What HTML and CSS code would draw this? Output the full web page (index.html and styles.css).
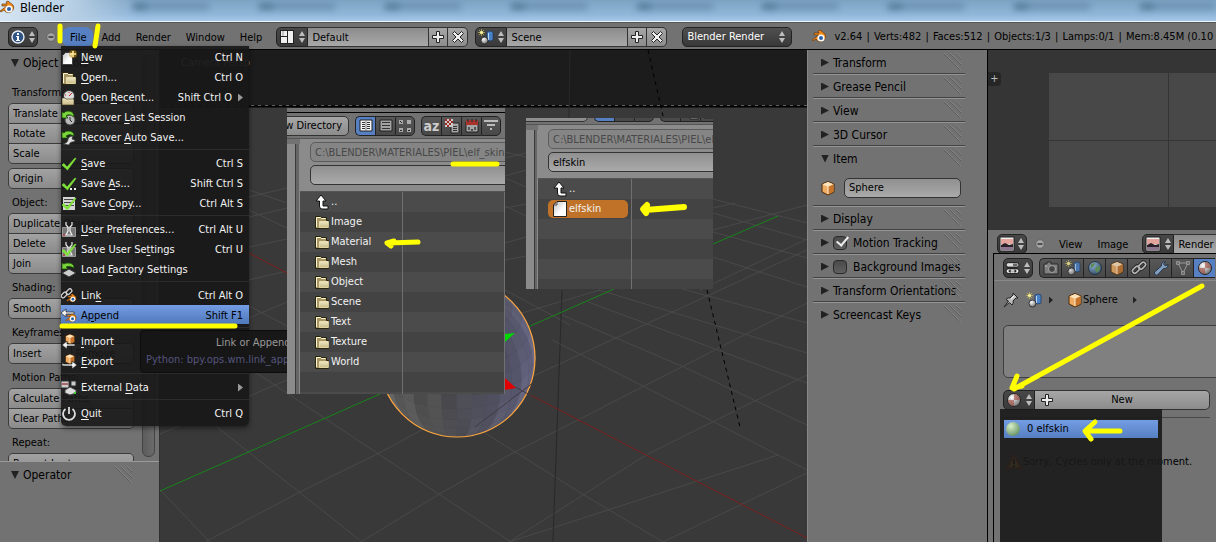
FILE: index.html
```html
<!DOCTYPE html>
<html lang="en">
<head>
    <meta charset="utf-8">
    <title>Blender</title>
    <link rel="stylesheet" href="styles.css">
</head>
<body>
    <svg class="defs" width="0" height="0">
        <defs>
            <linearGradient id="paper" x1="0" y1="0" x2="1" y2="1"><stop offset="0" stop-color="#bbb"/><stop offset="0.6" stop-color="#fff"/></linearGradient>
            <linearGradient id="tan" x1="0" y1="0" x2="0" y2="1"><stop offset="0" stop-color="#efe8c4"/><stop offset="1" stop-color="#c8bb88"/></linearGradient>
            <radialGradient id="ball" cx="0.35" cy="0.3" r="0.8"><stop offset="0" stop-color="#fff"/><stop offset="1" stop-color="#666"/></radialGradient>
            <radialGradient id="greenball" cx="0.35" cy="0.3" r="0.8"><stop offset="0" stop-color="#d8f0c8"/><stop offset="1" stop-color="#5d8a60"/></radialGradient>
            <radialGradient id="world" cx="0.35" cy="0.3" r="0.8"><stop offset="0" stop-color="#9cc4e8"/><stop offset="1" stop-color="#27486e"/></radialGradient>
        </defs>
        <symbol id="i-blender" viewBox="0 0 16 16">
            <path d="M1 11 8 6H3V4h5L7 2l2-1 5 4a5 5 0 1 1-9 5l-3 2z" fill="#f08a1c" stroke="#6e3a08" stroke-width="0.7"/>
            <circle cx="10" cy="9" r="3.6" fill="#fff"/><circle cx="10" cy="9" r="2" fill="#2a61a8"/>
        </symbol>
        <symbol id="i-updown" viewBox="0 0 8 14"><path d="M4 1 7 6H1zM4 13 1 8h6z" fill="#bdbdbd"/></symbol>
        <symbol id="i-info" viewBox="0 0 16 16"><circle cx="8" cy="8" r="6" fill="#2f5484" stroke="#e8eef6" stroke-width="1.4"/><path d="M7 4h2v2H7zM6 7h3v4h1v1H6v-1h1V8H6z" fill="#fff"/></symbol>
        <symbol id="i-minus" viewBox="0 0 10 10"><circle cx="5" cy="5" r="4.2" fill="#a5a5a5" stroke="#555" stroke-width="0.6"/><path d="M2.5 5h5" stroke="#333" stroke-width="1.5"/></symbol>
        <symbol id="i-plus" viewBox="0 0 16 16"><path d="M6.5 2.5h3v4h4v3h-4v4h-3v-4h-4v-3h4z" fill="#eee" stroke="#222"/></symbol>
        <symbol id="i-x" viewBox="0 0 16 16"><path d="m4.500 2.500 3.500 3.500 3.500-3.500 2 2L10 8l3.500 3.500-2 2L8 10l-3.500 3.500-2-2L6 8 2.500 4.500z" fill="#eee" stroke="#222"/></symbol>
        <symbol id="i-screen" viewBox="0 0 16 16"><path d="M1 1h14v14H1z" fill="#222"/><path d="M2 2h6v5H2zM2 8h6v6H2zM9 2h5v12H9z" fill="#f0f0f0"/><path d="M4 2v5" stroke="#999"/></symbol>
        <symbol id="i-scene" viewBox="0 0 16 16">
            <path d="M3.500 0v7M0 3.500h7M1 1l5 5M6 1 1 6" stroke="#d8cc50" stroke-width="0.6"/><circle cx="3.500" cy="3.500" r="1.600" fill="#f6efa0"/>
            <path d="M9 3q3-2 6 0v8q-3 2-6 0z" fill="#4a82c8" stroke="#1c3558" stroke-width="0.7"/><path d="M10.500 4v7" stroke="#b9d8f4"/>
            <circle cx="6.500" cy="11.500" r="3.500" fill="url(#ball)" stroke="#222" stroke-width="0.8"/>
        </symbol>
        <symbol id="i-new" viewBox="0 0 16 16"><path d="m4.500 2.500-3 3v9h10v-12z" fill="url(#paper)" stroke="#222" stroke-width="0.7"/><circle cx="12" cy="4" r="4" fill="#b8860b" opacity="0.55"/><path d="M12 1v6M9 4h6" stroke="#ffe9a0" stroke-width="1.6"/></symbol>
        <symbol id="i-folder" viewBox="0 0 16 16"><path d="M1.500 14.500v-12h5l1 1h5v3h2v8z" fill="#a89766" stroke="#29240f"/><path d="M2.500 13V3.500h4l1 1h4" stroke="#fff6d0" fill="none"/><path d="M5.500 7.500h9v6h-9z" fill="url(#tan)" stroke="#fff3c4" stroke-width="0.6"/></symbol>
        <symbol id="i-recent" viewBox="0 0 16 16"><circle cx="8" cy="6" r="5.500" fill="#ddd" stroke="#333"/><path d="m8 6 3-3M4 5h1M8 2v1" stroke="#b22"/><path d="M1 8h3l1 1h8v6H1z" fill="url(#tan)" stroke="#3b331a" stroke-width="0.6"/></symbol>
        <symbol id="i-recover" viewBox="0 0 16 16"><circle cx="9" cy="10" r="5" fill="#bbb" stroke="#444"/><path d="M9 7v3l2 2" stroke="#222" fill="none"/><path d="M1 2v6h6L5 6q3-3 8 1 0-6-6-6Q4 1 3 3z" fill="#7ad53c" stroke="#1d5208" stroke-width="0.8"/></symbol>
        <symbol id="i-autosave" viewBox="0 0 16 16"><path d="M2 14q5-1 5-5 1-3 5-3l-1 3 3 1q0 2-3 2-2 0-3 3z" fill="#ddd" stroke="#333" stroke-width="0.7"/><path d="M1 2v6h6L5 6q3-3 8 0 0-5-6-5Q4 1 3 3z" fill="#7ad53c" stroke="#1d5208" stroke-width="0.8"/></symbol>
        <symbol id="i-check" viewBox="0 0 16 16"><path d="m1 9 2-1.500 3 3.500 8-9 1 .5L6.500 14z" fill="#7fe33a" stroke="#7fe33a" stroke-width="0.6"/></symbol>
        <symbol id="i-saveas" viewBox="0 0 16 16"><use href="#i-check"/><path d="M9 12h2v2H9zM13 12h2v2h-2z" fill="#eee"/></symbol>
        <symbol id="i-savecopy" viewBox="0 0 16 16"><path d="M2 1h12v13H2z" fill="#d5d5d5"/><path d="M3 3.500h10M3 6.500h10M3 9.500h10" stroke="#444"/><use href="#i-check"/></symbol>
        <symbol id="i-prefs" viewBox="0 0 16 16"><path d="M1.500 5.500h13v9h-13z" fill="#777" stroke="#999"/><path d="M5 0v3l2 2v4l-2 4h6L9 9V5l2-2V0" fill="none" stroke="#eee" stroke-width="1.2"/><path d="M2 13h2" stroke="#d22"/></symbol>
        <symbol id="i-saveprefs" viewBox="0 0 16 16"><use href="#i-prefs"/><use href="#i-check"/></symbol>
        <symbol id="i-factory" viewBox="0 0 16 16"><path d="m1 11 7-4 7 4-7 4z" fill="#ccc" stroke="#333"/><path d="M1 1v6h6L5 5q3-2 8 1 0-5-6-5Q4 1 3 2z" fill="#7ad53c" stroke="#1d5208" stroke-width="0.8"/></symbol>
        <symbol id="i-chain" viewBox="0 0 16 16"><g fill="none" stroke="#111" stroke-width="3.4"><rect x="1" y="7.500" width="8" height="4.500" rx="2.200" transform="rotate(-45 5 9.700)"/><rect x="7" y="3.500" width="8" height="4.500" rx="2.200" transform="rotate(-45 11 5.700)"/></g><g fill="none" stroke="#ccc" stroke-width="1.700"><rect x="1" y="7.500" width="8" height="4.500" rx="2.200" transform="rotate(-45 5 9.700)"/><rect x="7" y="3.500" width="8" height="4.500" rx="2.200" transform="rotate(-45 11 5.700)"/></g></symbol>
        <symbol id="i-link" viewBox="0 0 16 16"><use href="#i-blender" x="5" y="5" width="11" height="11"/><use href="#i-chain" x="-1" y="-1" width="13" height="13"/></symbol>
        <symbol id="i-append" viewBox="0 0 16 16"><use href="#i-blender" x="4" y="4" width="12" height="12"/><path d="m0 5 5-4v3h8v2H5v3z" fill="#f4f4f4" stroke="#222" stroke-width="0.7"/></symbol>
        <symbol id="i-cube" viewBox="0 0 16 16"><path d="m8 1.500 6 2.500v8l-6 3-6-3V4z" fill="#f0ac62" stroke="#4a2a08"/><path d="m8 2 5.500 2.200L8 7 2.500 4.200z" fill="#ffe3bd"/><path d="m8 7 5.500-2.800v7.500L8 14.500z" fill="#c8742a"/><path d="M8 7v7" stroke="#fff0da"/></symbol>
        <symbol id="i-import" viewBox="0 0 16 16"><use href="#i-cube" x="3" y="-1" width="12" height="12"/><path d="m1 11 5-4v3h8v2H6v3z" fill="#f4f4f4" stroke="#222" stroke-width="0.7"/></symbol>
        <symbol id="i-export" viewBox="0 0 16 16"><use href="#i-cube" x="3" y="-1" width="12" height="12"/><path d="m16 11-5-4v3H3q-2 0-2-2v3q0 1 2 1h8v3z" fill="#f4f4f4" stroke="#222" stroke-width="0.7"/></symbol>
        <symbol id="i-external" viewBox="0 0 16 16"><path d="M0 1h8v7H0zM10 1h5v5h-5z" fill="#ccc" stroke="#333"/><path d="M1 4h6" stroke="#a66" stroke-width="2"/><path d="m4 10 5-3 6 3v3l-6 2-5-2z" fill="#ddd" stroke="#444"/><path d="M13 13h2" stroke="#4c3" stroke-width="2"/></symbol>
        <symbol id="i-quit" viewBox="0 0 16 16"><path d="M4.500 3a6 6 0 1 0 7 0M8 1v7" fill="none" stroke="#ddd" stroke-width="1.800"/></symbol>
        <symbol id="i-up" viewBox="0 0 16 16"><path d="m7 1 5 6H9v5h5v3H8q-2.500 0-2.500-3V7H2z" fill="#fff" stroke="#111"/></symbol>
        <symbol id="i-file" viewBox="0 0 16 16"><path d="m5 .5-3.500 3.500v11.500h13v-15z" fill="url(#paper)" stroke="#222"/><path d="M5 1v3H2" fill="none" stroke="#555"/></symbol>
        <symbol id="i-view1" viewBox="0 0 16 16"><path d="M2 2h12v11H2z" fill="#f5f5f5" stroke="#222"/><path d="M4 4.500h3M4 6.500h3M4 8.500h3M4 10.500h3M9 4.500h3M9 6.500h3M9 8.500h3M9 10.500h3" stroke="#333"/><path d="M8 3v10" stroke="#777"/></symbol>
        <symbol id="i-view2" viewBox="0 0 16 16"><path d="M2 2h12v11H2z" fill="#a2a2a2" stroke="#222"/><path d="M4 4.500h8M4 7.500h8M4 10.500h8" stroke="#333"/></symbol>
        <symbol id="i-view3" viewBox="0 0 16 16"><path d="M2 2h4v4H2zM10 2h4v4h-4zM2 10h4v4H2zM10 10h4v4h-4z" fill="#aaa"/><path d="M3 3h1v1H3zM4 4h1v1H4zM3 12h2v1H3zM11 12h2v1h-2z" fill="#222"/></symbol>
        <symbol id="i-ext" viewBox="0 0 16 16"><path d="M7 5h8v10H7z" fill="#a5a5a5" stroke="#222"/><path d="M9 8.500h4M9 10.500h4M9 12.500h4" stroke="#333"/><path d="M1 1h8v8H1z" fill="#ccc"/><path d="M1 1h2v2H1zM5 1h2v2H5zM3 3h2v2H3zM7 3h2v2H7zM1 5h2v2H1zM5 5h2v2H5zM3 7h2v2H3z" fill="#a02a22"/></symbol>
        <symbol id="i-date" viewBox="0 0 16 16"><path d="M2 4h12v10H2z" fill="#a5a5a5" stroke="#222"/><path d="M2 2h12v5H2z" fill="#a8332b"/><path d="M4 1v3M8 1v3M12 1v3M5 9v3M11 9v3M7 12h2" stroke="#333" stroke-width="1.400"/></symbol>
        <symbol id="i-filter" viewBox="0 0 16 16"><path d="M1 3h14M4 7h8M7 11h2" stroke="#bbb" stroke-width="2"/></symbol>
        <symbol id="i-image" viewBox="0 0 16 16"><path d="M1 1h14v14H1z" fill="#eee" stroke="#222"/><path d="M2 3h12v5H2z" fill="#e3a49c"/><path d="m2 9 4-2 4 2 4-1v3H2z" fill="#2b2027"/><path d="M2 11h12v3H2z" fill="#8d7790"/></symbol>
        <symbol id="i-props" viewBox="0 0 18 16"><rect x="1.500" y="2" width="14" height="5" rx="2" fill="#ddd" stroke="#111"/><path d="M9 3h5v3H9z" fill="#666"/><rect x="1.500" y="9" width="14" height="5" rx="2" fill="#f5f5f5" stroke="#111"/><path d="m4 11.500 2-1.500v3zM13 11.500 11 10v3zM5 11.500h7" fill="#111" stroke="#111" stroke-width="0.5"/></symbol>
        <symbol id="i-camera" viewBox="0 0 16 16"><path d="M1 4h3V2h4v2h7v10H1z" fill="#8c8c8c" stroke="#222"/><circle cx="9" cy="9" r="3.500" fill="#444" stroke="#bbb"/><path d="M2 6h2" stroke="#ddd"/></symbol>
        <symbol id="i-world" viewBox="0 0 16 16"><circle cx="8" cy="8" r="6.500" fill="url(#world)" stroke="#1b2c40"/><path d="m4 4 4-1-1 3-3 2zM9 7l4-1v4l-3 3-2-3z" fill="#5f9a58"/></symbol>
        <symbol id="i-wrench" viewBox="0 0 16 16"><path d="m1.500 12 7-6q-1-4 4-4.500L10.500 4l2 2 2.500-2q0 5-4.500 4.500l-6 6.500q-3 1-3-3z" fill="#8fb3de" stroke="#1d2c44"/></symbol>
        <symbol id="i-mesh" viewBox="0 0 16 16"><path d="M3 3h10L8 13z" fill="none" stroke="#aaa"/><path d="M1.500 1.500h3v3h-3zM11.500 1.500h3v3h-3zM6.500 11.500h3v3h-3z" fill="#777" stroke="#bbb" stroke-width="0.7"/></symbol>
        <symbol id="i-material" viewBox="0 0 16 16"><circle cx="8" cy="8" r="6.500" fill="url(#ball)" stroke="#222"/><path d="M8 2a6 6 0 0 1 6 6H8zM8 8v6a6 6 0 0 1-6-6z" fill="#a3483a" opacity="0.6"/></symbol>
        <symbol id="i-pin" viewBox="0 0 16 16"><path d="m1 15 4.500-6L3 7.500Q5 5 7 6l3-3V1l5 5h-2l-3 3q1 2-1 4l-2.500-2.500z" fill="#bdbdbd" stroke="#222"/><path d="m8 7 3-3" stroke="#fff"/></symbol>
        <symbol id="i-warn" viewBox="0 0 16 16"><path d="m8 1 7 13H1z" fill="#f0c860" stroke="#c84a18" stroke-width="1.500"/><path d="M8 5v5M8 11v2" stroke="#111" stroke-width="1.600"/></symbol>
        <symbol id="i-grip" viewBox="0 0 18 18"><path d="m0 1 17 17M6 1l11 11M12 1l5 5" stroke="#8c8c8c" stroke-width="0.7"/><path d="m0 2 16 16M6 2l11 11M12 2l5 5" stroke="#545454" stroke-width="0.7"/></symbol>
    </svg>

    <div class="app">
        <div class="titlebar">
            <svg class="icon"><use href="#i-blender"/></svg>
            <span>Blender</span>
            <div class="tabs"><i></i><i></i><i></i><i></i><i></i><i></i><i></i><i></i><i></i></div>
        </div>

        <header class="header">
            <button class="dark info" aria-label="Editor type"><svg class="icon"><use href="#i-info"/></svg><svg class="updown"><use href="#i-updown"/></svg></button>
            <button class="collapse" aria-label="Collapse menus"><svg><use href="#i-minus"/></svg></button>
            <nav class="menubar">
                <button class="active">File</button>
                <button>Add</button>
                <button>Render</button>
                <button>Window</button>
                <button>Help</button>
            </nav>
            <div class="datablock">
                <button class="dark" aria-label="Screen"><svg class="icon"><use href="#i-screen"/></svg><svg class="updown"><use href="#i-updown"/></svg></button>
                <input type="text" aria-label="Screen name" value="Default">
                <button class="light" aria-label="Add screen"><svg class="icon"><use href="#i-plus"/></svg></button>
                <button class="light" aria-label="Delete screen"><svg class="icon"><use href="#i-x"/></svg></button>
            </div>
            <div class="datablock">
                <button class="dark" aria-label="Scene"><svg class="icon"><use href="#i-scene"/></svg><svg class="updown"><use href="#i-updown"/></svg></button>
                <input type="text" aria-label="Scene name" value="Scene">
                <button class="light" aria-label="Add scene"><svg class="icon"><use href="#i-plus"/></svg></button>
                <button class="light" aria-label="Delete scene"><svg class="icon"><use href="#i-x"/></svg></button>
            </div>
            <div class="engine">
                <select aria-label="Render engine"><option>Blender Render</option></select>
                <svg class="updown"><use href="#i-updown"/></svg>
            </div>
            <svg class="icon logo"><use href="#i-blender"/></svg>
            <span class="stats">v2.64 <i>|</i> Verts:482 <i>|</i> Faces:512 <i>|</i> Objects:1/3 <i>|</i> Lamps:0/1 <i>|</i> Mem:8.45M (0.10</span>
        </header>

        <main class="workspace">
            <aside class="shelf">
                <section class="tools">
                    <h2 class="open">Object Tools</h2>
                    <div class="tool-list">
                        <p>Transform:</p>
                        <div class="group"><button>Translate</button><button>Rotate</button><button>Scale</button></div>
                        <div class="group"><button>Origin</button></div>
                        <p>Object:</p>
                        <div class="group"><button>Duplicate Objects</button><button>Delete</button><button>Join</button></div>
                        <p>Shading:</p>
                        <div class="group pair"><button>Smooth</button><button>Flat</button></div>
                        <p>Keyframes:</p>
                        <div class="group pair"><button>Insert</button><button>Remove</button></div>
                        <p>Motion Paths:</p>
                        <div class="group"><button>Calculate Paths</button><button>Clear Paths</button></div>
                        <p>Repeat:</p>
                        <div class="group"><button>Repeat Last</button></div>
                    </div>
                    <div class="scrollbar"></div>
                </section>
                <section class="operator">
                    <h2 class="open">Operator</h2>
                    <svg class="grip"><use href="#i-grip"/></svg>
                </section>
            </aside>

            <section class="viewport">
                <svg class="scene" viewBox="160 50 647 492" preserveAspectRatio="xMinYMin slice">
                    <g stroke="#494949" fill="none">
                        <path d="M160 490 210 542M160 382 361 541M249 368 511 542M453 413 584 495 663 542M552 340 714 422 807 470M562 315 684 367 807 425M588 302 807 383M599 290 807 353M620 272 807 323M713 257 807 287M713 232 807 258M713 213 807 240M713 199 807 223"/>
                        <path d="M205 542 300 492 381 452 453 413 807 250M361 542 441 493 513 453 807 303M509 542 778 455M663 542 807 473M509 542 646 455 807 375M700 290 807 239M713 230 807 205M713 208 735 203M160 434 287 380M249 197 287 188M249 217 287 208M249 247 287 239M249 280 287 271M249 318 287 302M249 190 287 203M249 210 287 228M249 306 287 326M505 158 526 153M505 176 526 170M505 208 526 204M505 243 526 237M505 260 526 256M505 152 526 157M505 178 526 187M505 206 526 216M505 290 570 325M505 318 600 290"/>
                    </g>
                    <path d="M160 50h647v56H160z" fill="#1c1c1c"/>
                    <path d="M160 106.500H807" stroke="#000" stroke-width="2"/><path d="M160 105.500H807" stroke="#606060" stroke-dasharray="3 4"/>
                    <path d="M570 50 569 118M562 290 553 542" stroke="#292929" fill="none"/>
                    <path d="M648 50 663 116M707 290 740 427" stroke="#000" stroke-dasharray="4 4"/>
                    <path d="M160 491 380 394M528 327 614 289M713 244 778 216" stroke="#18841b"/>
                    <path d="M249 253 287 273M515 387 646 455 807 538" stroke="#7b1e1e" fill="none"/>
                    <g id="facets"></g>
                    <ellipse cx="457" cy="358" rx="78" ry="79" fill="none" stroke="#ffa53c" stroke-width="1.200"/>
                    <path d="m475 427 59-45M515 387l17 9" stroke="#403c44"/>
                    <path d="m505 334 10-1-10 9z" fill="#00d800"/><path d="m505 378 11 10-11 2z" fill="#e00000"/>
                </svg>
                <span class="persp">Camera Persp</span>
            </section>

            <aside class="npanel">
                <section><h3>Transform</h3><svg class="grip"><use href="#i-grip"/></svg></section>
                <section><h3>Grease Pencil</h3><svg class="grip"><use href="#i-grip"/></svg></section>
                <section><h3>View</h3><svg class="grip"><use href="#i-grip"/></svg></section>
                <section><h3>3D Cursor</h3><svg class="grip"><use href="#i-grip"/></svg></section>
                <section>
                    <h3 class="open">Item</h3><svg class="grip"><use href="#i-grip"/></svg>
                    <div class="item-name"><svg class="icon"><use href="#i-cube"/></svg><input type="text" aria-label="Object name" value="Sphere"></div>
                </section>
                <section><h3>Display</h3><svg class="grip"><use href="#i-grip"/></svg></section>
                <section><h3><input type="checkbox" id="motion" checked><label for="motion">Motion Tracking</label></h3><svg class="grip"><use href="#i-grip"/></svg></section>
                <section><h3><input type="checkbox" id="background"><label for="background">Background Images</label></h3><svg class="grip"><use href="#i-grip"/></svg></section>
                <section><h3>Transform Orientations</h3><svg class="grip"><use href="#i-grip"/></svg></section>
                <section><h3>Screencast Keys</h3><svg class="grip"><use href="#i-grip"/></svg></section>
            </aside>

            <div class="right">
                <section class="image-editor">
                    <div class="canvas">
                        <button class="expand" aria-label="Show panel">+</button>
                        <div class="frame"></div>
                    </div>
                    <div class="image-header">
                        <button class="dark" aria-label="Editor type"><svg class="icon"><use href="#i-image"/></svg><svg class="updown"><use href="#i-updown"/></svg></button>
                        <button class="collapse" aria-label="Collapse menus"><svg><use href="#i-minus"/></svg></button>
                        <nav class="menubar"><button>View</button><button>Image</button></nav>
                        <div class="datablock">
                            <button class="dark" aria-label="Image"><svg class="icon"><use href="#i-image"/></svg><svg class="updown"><use href="#i-updown"/></svg></button>
                            <input type="text" aria-label="Image name" value="Render Result">
                        </div>
                    </div>
                </section>
                <section class="properties">
                    <div class="props-header">
                        <button class="dark" aria-label="Editor type"><svg class="icon"><use href="#i-props"/></svg><svg class="updown"><use href="#i-updown"/></svg></button>
                        <div class="prop-tabs">
                            <button aria-label="Render"><svg class="icon"><use href="#i-camera"/></svg></button>
                            <button aria-label="Scene"><svg class="icon"><use href="#i-scene"/></svg></button>
                            <button aria-label="World"><svg class="icon"><use href="#i-world"/></svg></button>
                            <button aria-label="Object"><svg class="icon"><use href="#i-cube"/></svg></button>
                            <button aria-label="Constraints"><svg class="icon"><use href="#i-chain"/></svg></button>
                            <button aria-label="Modifiers"><svg class="icon"><use href="#i-wrench"/></svg></button>
                            <button aria-label="Data"><svg class="icon"><use href="#i-mesh"/></svg></button>
                            <button class="active" aria-label="Material"><svg class="icon"><use href="#i-material"/></svg></button>
                        </div>
                    </div>
                    <div class="path">
                        <svg class="icon"><use href="#i-pin"/></svg>
                        <svg class="icon"><use href="#i-scene"/></svg>
                        <b></b>
                        <svg class="icon cube"><use href="#i-cube"/></svg>
                        <span>Sphere</span>
                        <b></b>
                    </div>
                    <div class="slots"></div>
                    <div class="material-row">
                        <button class="dark" aria-label="Browse material"><svg class="icon"><use href="#i-material"/></svg><svg class="updown"><use href="#i-updown"/></svg></button>
                        <button class="light"><svg class="icon"><use href="#i-plus"/></svg><span>New</span></button>
                        <div class="material-popup">
                            <button><svg class="icon"><circle cx="8" cy="8" r="7" fill="url(#greenball)"/></svg>0 elfskin</button>
                        </div>
                    </div>
                    <div class="warning"><svg class="icon"><use href="#i-warn"/></svg>Sorry, Cycles only at the moment.</div>
                </section>
            </div>
        </main>

        <div class="file-menu">
            <button><svg class="icon"><use href="#i-new"/></svg><span><u>N</u>ew</span><kbd>Ctrl N</kbd></button>
            <button><svg class="icon"><use href="#i-folder"/></svg><span><u>O</u>pen...</span><kbd>Ctrl O</kbd></button>
            <button class="sub"><svg class="icon"><use href="#i-recent"/></svg><span>Open <u>R</u>ecent...</span><kbd>Shift Ctrl O</kbd></button>
            <button><svg class="icon"><use href="#i-recover"/></svg><span>Recover <u>L</u>ast Session</span></button>
            <button><svg class="icon"><use href="#i-autosave"/></svg><span>Recover <u>A</u>uto Save...</span></button>
            <hr>
            <button><svg class="icon"><use href="#i-check"/></svg><span><u>S</u>ave</span><kbd>Ctrl S</kbd></button>
            <button><svg class="icon"><use href="#i-saveas"/></svg><span>Save <u>A</u>s...</span><kbd>Shift Ctrl S</kbd></button>
            <button><svg class="icon"><use href="#i-savecopy"/></svg><span>Save <u>C</u>opy...</span><kbd>Ctrl Alt S</kbd></button>
            <hr>
            <button><svg class="icon"><use href="#i-prefs"/></svg><span><u>U</u>ser Preferences...</span><kbd>Ctrl Alt U</kbd></button>
            <button><svg class="icon"><use href="#i-saveprefs"/></svg><span>Save User Se<u>t</u>tings</span><kbd>Ctrl U</kbd></button>
            <button><svg class="icon"><use href="#i-factory"/></svg><span>Load <u>F</u>actory Settings</span></button>
            <hr>
            <button><svg class="icon"><use href="#i-link"/></svg><span>Lin<u>k</u></span><kbd>Ctrl Alt O</kbd></button>
            <button class="active"><svg class="icon"><use href="#i-append"/></svg><span>A<u>p</u>pend</span><kbd>Shift F1</kbd></button>
            <hr>
            <button><svg class="icon"><use href="#i-import"/></svg><span><u>I</u>mport</span></button>
            <button><svg class="icon"><use href="#i-export"/></svg><span><u>E</u>xport</span></button>
            <hr>
            <button class="sub"><svg class="icon"><use href="#i-external"/></svg><span>External <u>D</u>ata</span></button>
            <hr>
            <button><svg class="icon"><use href="#i-quit"/></svg><span><u>Q</u>uit</span><kbd>Ctrl Q</kbd></button>
        </div>

        <div class="tooltip">
            <p>Link or Append</p>
            <p class="python">Python: bpy.ops.wm.link_app</p>
        </div>

        <div class="browser browser-dirs">
            <div class="browser-edge"></div>
            <div class="browser-bar">
                <button class="light dir">w Directory</button>
                <div class="icons">
                    <button class="active" aria-label="Short list"><svg class="icon"><use href="#i-view1"/></svg></button>
                    <button aria-label="Detailed list"><svg class="icon"><use href="#i-view2"/></svg></button>
                    <button aria-label="Thumbnails"><svg class="icon"><use href="#i-view3"/></svg></button>
                </div>
                <div class="icons">
                    <button class="az">az</button>
                    <button aria-label="Sort by extension"><svg class="icon"><use href="#i-ext"/></svg></button>
                    <button aria-label="Sort by date"><svg class="icon"><use href="#i-date"/></svg></button>
                    <button aria-label="Filter"><svg class="icon"><use href="#i-filter"/></svg></button>
                </div>
            </div>
            <div class="browser-body">
                <div class="gutter"></div>
                <div class="browser-main">
                    <div class="fields">
                        <input type="text" class="dim" aria-label="Directory" value="C:\BLENDER\MATERIALES\PIEL\elf_skin.blend">
                        <input type="text" aria-label="File name" value="">
                    </div>
                    <ul>
                        <li><svg class="icon"><use href="#i-up"/></svg>..</li>
                        <li><svg class="icon"><use href="#i-folder"/></svg>Image</li>
                        <li><svg class="icon"><use href="#i-folder"/></svg>Material</li>
                        <li><svg class="icon"><use href="#i-folder"/></svg>Mesh</li>
                        <li><svg class="icon"><use href="#i-folder"/></svg>Object</li>
                        <li><svg class="icon"><use href="#i-folder"/></svg>Scene</li>
                        <li><svg class="icon"><use href="#i-folder"/></svg>Text</li>
                        <li><svg class="icon"><use href="#i-folder"/></svg>Texture</li>
                        <li><svg class="icon"><use href="#i-folder"/></svg>World</li>
                    </ul>
                </div>
            </div>
        </div>

        <div class="browser browser-files">
            <div class="browser-bar">
                <button class="light dir">w Directory</button>
                <div class="icons">
                    <button class="active" aria-label="Short list"><svg class="icon"><use href="#i-view1"/></svg></button>
                    <button aria-label="Detailed list"><svg class="icon"><use href="#i-view2"/></svg></button>
                    <button aria-label="Thumbnails"><svg class="icon"><use href="#i-view3"/></svg></button>
                </div>
                <div class="icons">
                    <button class="az">az</button>
                    <button aria-label="Sort by extension"><svg class="icon"><use href="#i-ext"/></svg></button>
                    <button aria-label="Sort by date"><svg class="icon"><use href="#i-date"/></svg></button>
                </div>
            </div>
            <div class="browser-body">
                <div class="gutter"></div>
                <div class="browser-main">
                    <div class="fields">
                        <input type="text" class="dim" aria-label="Directory" value="C:\BLENDER\MATERIALES\PIEL\elf_skin.blend">
                        <input type="text" aria-label="File name" value="elfskin">
                    </div>
                    <ul>
                        <li><svg class="icon"><use href="#i-up"/></svg>..</li>
                        <li class="selected"><svg class="icon"><use href="#i-file"/></svg>elfskin</li>
                    </ul>
                </div>
            </div>
        </div>

        <!-- yellow marker strokes -->
        <svg class="marks">
            <path d="M60 26V41M98 26 95 46M62 326 235 326M453 164H497" stroke-width="5"/>
            <path d="M418 242 388 243M394 241 387 243 391 246" stroke-width="5"/>
            <path d="M684 207 645 210M647 205 643 209 646 213" stroke-width="6"/>
            <path d="M1202 286 1014 389M1017 376 1012 388 1022 386" stroke-width="5"/>
            <path d="M1120 431 1086 431M1095 422 1085 431 1091 439" stroke-width="5"/>
        </svg>
    </div>
    <script src="script.js"></script>
</body>
</html>
```
FILE: styles.css
```css
* {
    box-sizing: border-box;
}
body {
    margin: 0;
    background: #727272;
    color: #000;
    font-family: "DejaVu Sans Condensed", "DejaVu Sans", sans-serif;
    font-size: 11px;
    line-height: 14px;
}
button, input, select {
    font: inherit;
    color: inherit;
    margin: 0;
    padding: 0;
    border: 0;
    background: none;
    outline: none;
}
p, h2, h3, ul {
    margin: 0;
    padding: 0;
    font-weight: normal;
}
.defs {
    position: absolute;
}
.icon {
    width: 16px;
    height: 16px;
    flex: none;
}
.updown {
    width: 8px;
    height: 14px;
    flex: none;
}
.app {
    position: relative;
    display: flex;
    flex-direction: column;
    height: 100vh;
    overflow: hidden;
}

/* title bar */
.titlebar {
    display: flex;
    align-items: flex-start;
    gap: 5px;
    height: 22px;
    overflow: hidden;
    background: linear-gradient(90deg, #d5e4f2 0, #b8d0e5 70px, rgba(160, 190, 215, 0) 140px), linear-gradient(#7da3c3, #8fb5d8 14px, #a5c8ea);
    border-bottom: 1px solid #eef6ff;
    font-family: "Noto Sans", "Open Sans", sans-serif;
    font-size: 12px;
    line-height: 16px;
}
.titlebar .icon {
    margin-left: -1px;
}
.tabs {
    display: flex;
    flex: 1;
    justify-content: space-between;
    padding-left: 64px;
    filter: blur(3px);
}
.tabs i {
    width: 76px;
    height: 7px;
    margin-top: 3px;
    border-left: 14px solid rgba(70, 110, 135, 0.6);
    background: rgba(65, 100, 135, 0.35);
}

/* header */
.header {
    display: flex;
    align-items: center;
    height: 28px;
    padding: 2px 0 0 8px;
    flex: none;
    background: #727272;
    border-top: 1px solid #555;
    border-bottom: 1px solid #000;
    white-space: nowrap;
    overflow: hidden;
}
.dark {
    display: flex;
    align-items: center;
    justify-content: space-around;
    width: 30px;
    height: 20px;
    flex: none;
    border: 1px solid #222;
    border-radius: 5px;
    background: linear-gradient(#484848, #3a3a3a);
}
.light {
    display: flex;
    align-items: center;
    justify-content: center;
    height: 20px;
    border: 1px solid #333;
    background: linear-gradient(#a6a6a6, #8c8c8c);
}
.collapse {
    width: 10px;
    height: 10px;
    margin: 0 6px 0 8px;
    flex: none;
}
.collapse svg {
    display: block;
    width: 10px;
    height: 10px;
}
.menubar {
    display: flex;
    flex: none;
}
.menubar button {
    height: 20px;
    padding: 1px 7px 0 8px;
    border-radius: 8px;
}
.menubar .active {
    background: #5680c2;
}
.datablock {
    display: flex;
    flex: none;
    margin-left: 7px;
}
.datablock .dark {
    width: 32px;
    border-radius: 5px 0 0 5px;
}
.datablock input {
    width: 120px;
    height: 20px;
    padding: 0 4px;
    border: 1px solid #333;
    border-width: 1px 0;
    background: linear-gradient(#8c8c8c, #a8a8a8);
}
.datablock .light {
    width: 20px;
}
.datablock .light:last-child {
    border-left: 0;
    border-radius: 0 5px 5px 0;
}
.engine {
    display: flex;
    align-items: center;
    margin: 0 19px 0 15px;
    width: 110px;
    height: 20px;
    flex: none;
    border: 1px solid #222;
    border-radius: 5px;
    background: linear-gradient(#505050, #383838);
    color: #fff;
}
.engine select {
    appearance: none;
    flex: 1;
    padding-left: 4px;
}
.engine .updown {
    margin-right: 5px;
}
.stats {
    margin-left: 7px;
}
.stats i {
    margin: 0 1px;
    font-style: normal;
}

.workspace {
    display: grid;
    grid-template-columns: 160px 1fr 181px 228px;
    flex: 1;
    min-height: 0;
}

/* tool shelf */
.shelf {
    display: flex;
    flex-direction: column;
    min-height: 0;
    border-right: 1px solid #303030;
}
.tools {
    position: relative;
    height: 411px;
    padding: 3px 0 0 8px;
    overflow: hidden;
}
.operator {
    display: flex;
    flex: 1;
    align-items: flex-start;
    padding: 3px 26px 0 8px;
    border-top: 1px solid #9a9a9a;
}
h2 {
    flex: 1;
    height: 20px;
    padding-left: 3px;
    font-size: 12px;
    line-height: 20px;
}
h2::before, h3::before {
    content: "";
    display: inline-block;
    width: 8px;
    height: 8px;
    margin-right: 4px;
    background: #222;
    clip-path: polygon(0 0, 100% 50%, 0 100%);
}
.open::before {
    clip-path: polygon(0 0, 100% 0, 50% 100%);
}
.tool-list {
    width: 126px;
    margin-top: 10px;
}
.tool-list p {
    height: 20px;
    padding-left: 4px;
    line-height: 20px;
}
.group {
    display: grid;
    margin-bottom: 4px;
    border: 1px solid #3c3c3c;
    border-radius: 5px;
    overflow: hidden;
    background: #3c3c3c;
    gap: 1px;
}
.pair {
    grid-template-columns: 1fr 1fr;
}
.group button {
    height: 19px;
    padding-left: 4px;
    overflow: hidden;
    background: linear-gradient(#a2a2a2, #8b8b8b);
    text-align: left;
    white-space: nowrap;
}
.scrollbar {
    position: absolute;
    top: 5px;
    right: 4px;
    bottom: 4px;
    width: 13px;
    border: 1px solid #444;
    border-radius: 6px;
    background: linear-gradient(90deg, #5c5c5c, #6b6b6b);
}
.grip {
    width: 18px;
    height: 18px;
}

/* 3d view */
.viewport {
    position: relative;
    overflow: hidden;
    background: #393939;
}
.scene {
    display: block;
    width: 100%;
    height: 100%;
}
.persp {
    position: absolute;
    left: 21px;
    top: 6px;
    color: #999;
}

/* properties region */
.npanel {
    padding: 0 22px 0 5px;
    border-left: 1px solid #888;
    border-right: 1px solid #000;
    background: #727272;
    overflow: hidden;
}
.npanel section {
    position: relative;
    border-bottom: 1px solid #444;
    box-shadow: 0 1px #949494;
}
.npanel section:last-child {
    border: 0;
    box-shadow: none;
}
.npanel .grip {
    position: absolute;
    right: 3px;
    top: 2px;
}
h3 {
    display: flex;
    align-items: center;
    height: 23px;
    padding: 2px 4px 0 8px;
    font-size: 12px;
    white-space: nowrap;
}
h3 input {
    appearance: none;
    width: 14px;
    height: 14px;
    margin-right: 6px;
    border: 1px solid #2a2a2a;
    border-radius: 4px;
    background: linear-gradient(#4a4a4a, #606060);
}
h3 input:checked::after {
    content: "";
    display: block;
    width: 5px;
    height: 10px;
    margin: -3px 0 0 5px;
    border: solid #eee;
    border-width: 0 2px 2px 0;
    transform: rotate(40deg);
}
.item-name {
    display: flex;
    align-items: center;
    gap: 8px;
    height: 36px;
    padding: 1px 4px 0 7px;
}
.item-name input {
    flex: 1;
    min-width: 0;
    height: 20px;
    padding: 0 4px;
    border: 1px solid #333;
    border-radius: 5px;
    background: linear-gradient(#909090, #aaa);
}

/* right column */
.right {
    display: flex;
    flex-direction: column;
    min-width: 0;
    min-height: 0;
    overflow: hidden;
}
.image-editor {
    flex: none;
    height: 203px;
}
.canvas {
    position: relative;
    height: 180px;
    padding: 23px 0 0 61px;
    background: #353535;
}
.frame {
    height: 134px;
    background: linear-gradient(#353535, #353535) 119px 0 / 1px 100% no-repeat, linear-gradient(#353535, #353535) 0 67px / 100% 1px no-repeat, #484848;
}
.expand {
    position: absolute;
    left: 0;
    top: 22px;
    width: 13px;
    height: 14px;
    border-radius: 0 4px 4px 0;
    background: #262626;
    color: #bbb;
    line-height: 12px;
}
.image-header {
    display: flex;
    align-items: center;
    height: 24px;
    padding: 4px 0 0 9px;
    background: #727272;
    overflow: hidden;
}
.image-header .datablock {
    margin-left: 7px;
}
.properties {
    flex: 1;
    min-height: 0;
    margin-left: 5px;
    border: solid #000;
    border-width: 1px 0 0 1px;
    padding-left: 9px;
    overflow: hidden;
    background: #727272;
}
.props-header {
    display: flex;
    align-items: center;
    gap: 6px;
    height: 27px;
    margin-left: -9px;
    padding: 2px 0 0 9px;
    border-bottom: 1px solid #888;
}
.prop-tabs {
    display: flex;
    flex: none;
}
.prop-tabs button, .icons button {
    display: flex;
    align-items: center;
    justify-content: center;
    width: 22px;
    height: 20px;
    border: 1px solid #222;
    border-right-width: 0;
    background: linear-gradient(#585858, #484848);
}
.prop-tabs .icon {
    opacity: 0.8;
}
.prop-tabs .active, .icons .active {
    background: #5680c2;
}
.prop-tabs .active .icon {
    opacity: 1;
}
.prop-tabs button:first-child, .icons button:first-child {
    border-radius: 5px 0 0 5px;
}
.path {
    display: flex;
    align-items: center;
    height: 38px;
    gap: 7px;
}
.path b {
    width: 4px;
    height: 7px;
    background: #222;
    clip-path: polygon(0 0, 100% 50%, 0 100%);
}
.path .cube {
    margin-left: 7px;
}
.path span {
    margin: 0 8px 0 -7px;
}
.slots {
    height: 53px;
    margin: 6px -9px 12px 0;
    border: 1px solid #3f3f3f;
    border-radius: 5px;
    background: #808080;
}
.material-row {
    position: relative;
    display: flex;
    margin-right: 6px;
}
.material-row .dark {
    width: 32px;
    border-radius: 5px 0 0 5px;
}
.material-row .light {
    flex: 1;
    padding-left: 4px;
    border-left: 0;
    border-radius: 0 5px 5px 0;
}
.material-row .light span {
    flex: 1;
    padding-right: 20px;
}
.material-popup {
    position: absolute;
    left: -3px;
    top: 19px;
    width: 162px;
    height: 160px;
    padding: 11px 4px;
    background: rgba(26, 26, 26, 0.9);
}
.material-popup button {
    display: flex;
    align-items: center;
    gap: 6px;
    width: 100%;
    height: 18px;
    padding-left: 1px;
    background: linear-gradient(#739ce4, #5680c2);
}
.warning {
    display: flex;
    align-items: center;
    gap: 1px;
    margin: 7px 6px 0 -3px;
    height: 88px;
    padding-left: 6px;
    border-top: 1px solid #484848;
    white-space: nowrap;
}

/* file menu */
.file-menu {
    position: absolute;
    left: 61px;
    top: 46px;
    width: 188px;
    padding: 1px 0 3px;
    border-radius: 0 0 5px 5px;
    background: rgba(24, 24, 24, 0.92);
    box-shadow: 0 2px 5px rgba(0, 0, 0, 0.5);
    color: #f4f4f4;
}
.file-menu button {
    display: flex;
    align-items: center;
    gap: 4px;
    width: 100%;
    height: 20px;
    padding: 1px 6px 0 0;
    text-align: left;
}
.file-menu span {
    flex: 1;
}
.file-menu kbd {
    font: inherit;
}
.file-menu .sub::after {
    content: "";
    width: 5px;
    height: 8px;
    margin-left: 2px;
    background: #999;
    clip-path: polygon(0 0, 100% 50%, 0 100%);
}
.file-menu .active {
    background: linear-gradient(#739ce4, #4f78ba) 0 0 / 100% 19px no-repeat;
    color: #000;
}
.file-menu hr {
    height: 1px;
    margin: 2px 0 3px;
    border: 0;
    background: #2c2c2c;
}
.file-menu u {
    text-underline-offset: 2px;
}
.tooltip {
    position: absolute;
    left: 140px;
    top: 330px;
    width: 170px;
    padding: 4px 6px 3px;
    border: 1px solid #0c0c0c;
    border-radius: 4px;
    background: rgba(22, 22, 22, 0.95);
    color: #999;
    line-height: 15px;
    white-space: nowrap;
}
.tooltip p:first-child {
    padding-left: 69px;
}
.tooltip .python {
    color: #55557c;
    line-height: 19px;
    margin-left: -1px;
}

/* file browsers */
.browser {
    position: absolute;
    display: flex;
    flex-direction: column;
    overflow: hidden;
    background: #727272;
}
.browser-dirs {
    left: 287px;
    top: 108px;
    width: 218px;
    height: 286px;
}
.browser-files {
    left: 526px;
    top: 118px;
    width: 187px;
    height: 171px;
}
.browser-edge {
    height: 5px;
    flex: none;
    border-bottom: 1px solid #000;
}
.browser-bar {
    display: flex;
    align-items: center;
    gap: 6px;
    height: 26px;
    padding-top: 1px;
    flex: none;
    border-bottom: 1px solid #555;
}
.browser-files .browser-bar {
    margin-top: -19px;
}
.browser .dir {
    width: 64px;
    margin-left: -2px;
    padding-right: 6px;
    justify-content: flex-end;
    border-radius: 0 5px 5px 0;
    white-space: nowrap;
}
.icons {
    display: flex;
}
.icons button {
    width: 20px;
}
.icons button:last-child {
    border-right-width: 1px;
    border-radius: 0 5px 5px 0;
}
.icons .az {
    color: #ccc;
    font-size: 14px;
    font-weight: bold;
}
.browser-body {
    display: flex;
    flex: 1;
    min-height: 0;
}
.gutter {
    width: 13px;
    margin-top: 5px;
    border-right: 1px solid #8a8a8a;
    background: linear-gradient(90deg, #8b8b8b 0 8px, #3a3a3a 8px 9px, #666 9px);
}
.browser-files .gutter {
    width: 12px;
}
.browser-main {
    display: flex;
    flex-direction: column;
    flex: 1;
    min-width: 0;
}
.fields {
    display: flex;
    flex-direction: column;
    gap: 3px;
    padding: 3px 0 6px 10px;
    flex: none;
    border-bottom: 1px solid #555;
    background: #8b8b8b;
}
.browser-files .fields {
    padding-top: 4px;
}
.fields input {
    height: 20px;
    margin-right: -6px;
    padding: 0 4px;
    border: 1px solid #333;
    border-radius: 5px;
    background: linear-gradient(#909090, #aaa);
}
.fields .dim {
    border-color: #5c5c5c;
    background: #858585;
    color: #484848;
}
.browser ul {
    flex: 1;
    list-style: none;
    color: #f2f2f2;
    background: linear-gradient(#707070, #707070) 102px 0 / 1px 100% no-repeat, linear-gradient(#707070, #707070) 204px 0 / 1px 100% no-repeat, repeating-linear-gradient(#4b4b4b 0 20px, #434343 20px 40px);
}
.browser-files ul {
    background-position: 93px 0, 300px 0, 0 0;
}
.browser li {
    display: flex;
    align-items: center;
    height: 20px;
    padding-left: 14px;
    gap: 1px;
}
.browser-files li {
    padding-left: 4px;
    margin-left: 10px;
}
.browser-files .selected {
    width: 80px;
    height: 18px;
    margin-top: 1px;
    border-radius: 5px;
    background: #c07328;
}

.marks {
    position: absolute;
    left: 0;
    top: 0;
    width: 100%;
    height: 100%;
    fill: none;
    stroke: #ffff00;
    stroke-linecap: round;
    stroke-linejoin: round;
    pointer-events: none;
}
```
FILE: script.js
```js
// flat shaded uv sphere, 32 segments x 16 rings
const facets = document.getElementById('facets');
const tilt = 0.5;

function project(ring, seg) {
    const lat = Math.PI * (ring / 16 - 0.5);
    const lon = Math.PI * 2 * seg / 32;
    const x = Math.cos(lat) * Math.cos(lon);
    const y = Math.cos(lat) * Math.sin(lon);
    const z = Math.sin(lat);
    return [x, z * Math.cos(tilt) + y * Math.sin(tilt), y * Math.cos(tilt) - z * Math.sin(tilt)];
}

let shapes = '';
for (let r = 0; r < 16; r++) {
    for (let s = 0; s < 32; s++) {
        const quad = [project(r, s), project(r, s + 1), project(r + 1, s + 1), project(r + 1, s)];
        const depth = quad.reduce((sum, p) => sum + p[2], 0) / 4;
        if (depth > 0.05) continue;
        const side = (quad[0][0] + quad[2][0]) / 2;
        const noise = Math.sin(r * 12.9 + s * 78.2) * 5;
        const edge = Math.abs(side) * (1 + depth) * 34;
        const grey = Math.round(76 + noise + edge);
        const blue = Math.round(grey + Math.max(0, side + 0.3) * 22);
        const points = quad.map(p => `${(457 + p[0] * 78).toFixed(1)},${(358 - p[1] * 79).toFixed(1)}`).join(' ');
        const fill = `rgb(${grey},${grey},${blue})`;
        shapes += `<polygon points="${points}" fill="${fill}" stroke="${fill}" stroke-width="0.5"/>`;
    }
}
facets.innerHTML = shapes;
```
